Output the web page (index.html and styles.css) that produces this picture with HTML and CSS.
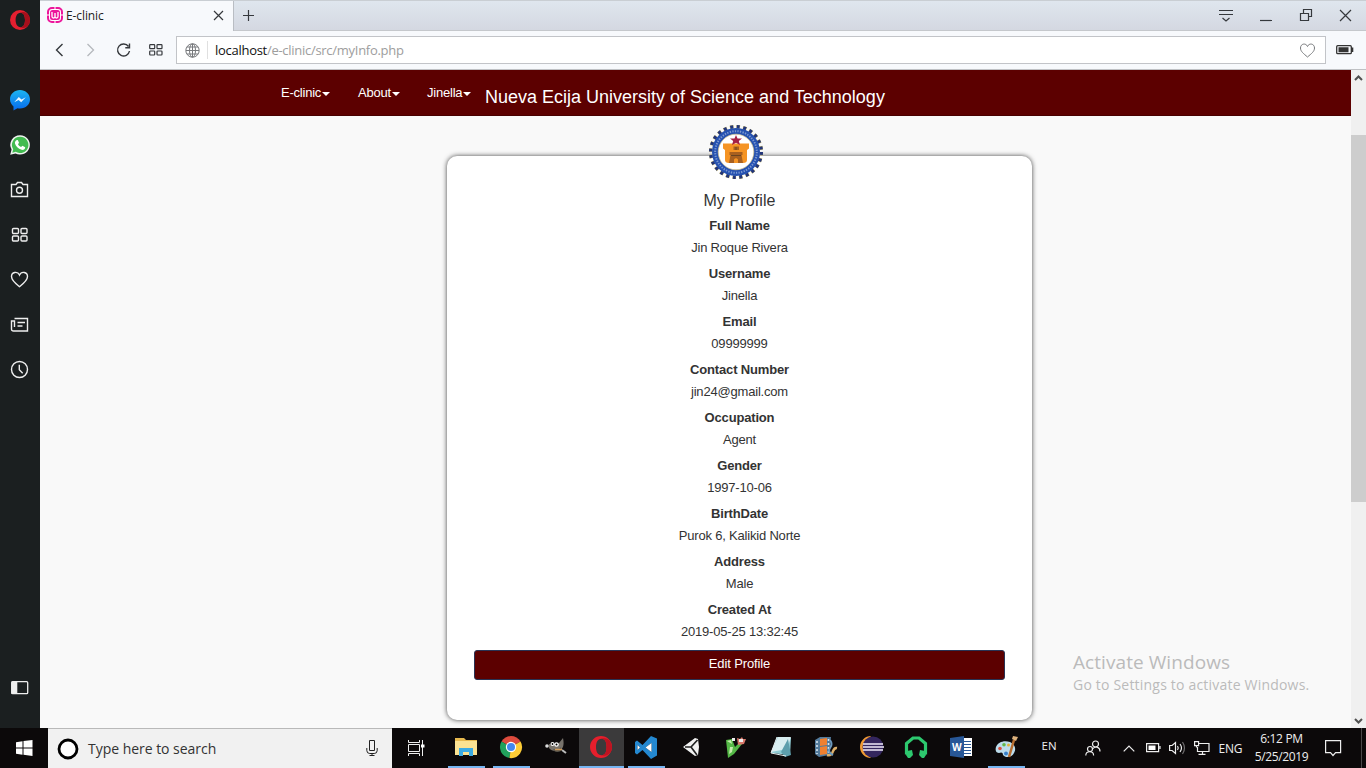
FILE: index.html
```html
<!DOCTYPE html>
<html lang="en">
<head>
<meta charset="utf-8">
<title>E-clinic</title>
<link rel="stylesheet" href="styles.css">
</head>
<body>
<div class="desktop">
<div class="browser">
  <aside class="sidebar">
    <div class="side-brand"><svg width="20" height="20" viewBox="0 0 20 20"><path fill="#e51f30" fill-rule="evenodd" d="M10 0a10 10 0 1 0 0 20a10 10 0 1 0 0-20zM10.500 2.800c3.400 0 4.500 3.700 4.500 7.200s-1.100 7.200-4.500 7.200s-4.900-3.700-4.900-7.200s1.500-7.200 4.900-7.200z"/><path fill="#a70f1b" d="M10.500 2.800c5-2.500 9.500 2 9.500 7.200s-4.500 9.700-9.500 7.200c3.500 0 4.500-3.700 4.500-7.200s-1-7.200-4.500-7.200z"/></svg></div>
    <div class="slot chat"><svg width="20" height="21" viewBox="0 0 20 21"><defs><linearGradient id="msg" x2="0" y2="1"><stop stop-color="#1cb5f2"/><stop offset="1" stop-color="#0669ee"/></linearGradient></defs><path fill="url(#msg)" d="M10 0C4.500 0 0 4 0 9.200c0 3 1.500 5.400 3.500 7.200V20.500l4-2.200c7 1.400 12.500-3 12.500-9C20 4 15.500 0 10 0z"/><path fill="#e9f5ff" d="M4.200 12.300l4.600-5.300 2.700 2.400 4.300-2.200-4.600 5-2.600-2.200z"/></svg></div>
    <div class="slot"><svg width="20" height="20" viewBox="0 0 20 20"><path fill="#eef3ee" d="M10.200.2a9.600 9.600 0 0 0-8.600 14.300L.2 19.800l5.300-1.400A9.700 9.700 0 1 0 10.200.2z"/><path fill="#42bb50" d="M10.200 1.700a8.200 8.200 0 0 0-7 12.600l-.9 3.400 3.500-.9A8.200 8.200 0 1 0 10.200 1.700z"/><path fill="#fff" d="M6.300 5.200l1.500-.1 1.200 2.700-1 1.500c.8 1.400 1.700 2.200 3.100 2.800l1.300-1.300 2.800 1.400c-.1 2.200-1.800 3-3.600 2.600-3.500-.8-5.800-3.400-6.600-6.200-.3-1.500.3-2.600 1.300-3.400z"/></svg></div>
    <div class="slot"><svg class="line" width="20" height="18" viewBox="0 0 20 18"><path d="M1.500 3.500h4.500l1.500-2h4L13 3.500h4.500v12h-16z"/><circle cx="9.500" cy="9.300" r="3"/></svg></div>
    <div class="slot"><svg class="line" width="18" height="16" viewBox="0 0 18 16"><rect x="1.500" y="1.500" width="6" height="5" rx="1"/><rect x="10" y="1.500" width="6" height="5" rx="1"/><rect x="1.500" y="9" width="6" height="5" rx="1"/><rect x="10" y="9" width="6" height="5" rx="1"/></svg></div>
    <div class="slot"><svg class="line" width="20" height="17" viewBox="0 0 20 17"><path d="M9.500 15.700C5 12.200 1.500 9 1.500 5.500c0-4.500 6-5.700 8-1.500 2-4.200 8-3 8 1.500 0 3.500-3.500 6.700-8 10.200z"/></svg></div>
    <div class="slot"><svg class="line" width="20" height="16" viewBox="0 0 20 16"><path d="M4.500 1.500h13v12.500h-14q-2 0-2-2v-8h3v6M7.500 5.500h7.500M7.500 9h5"/></svg></div>
    <div class="slot"><svg class="line" width="20" height="20" viewBox="0 0 20 20"><circle cx="9.500" cy="9.500" r="8"/><path d="M9.300 4.800v5l3.400 3.400"/></svg></div>
    <div class="side-toggle"><svg width="20" height="16" viewBox="0 0 20 16"><rect x="1.700" y="1.700" width="16" height="12" rx="1" fill="none" stroke="#eee" stroke-width="1.300"/><path fill="#eee" d="M1.500 1.500h5.800v12.500H1.500z"/></svg></div>
  </aside>
  <main class="window">
    <div class="tabs">
      <div class="tab">
        <svg width="16" height="16" viewBox="0 0 16 16"><rect x="1" y="1" width="14" height="14" rx="4" fill="#fff" stroke="#ec169b" stroke-width="2"/><rect x="3" y="3" width="10" height="10" rx="2.500" fill="#ec169b"/><path d="M5 5v4.500q0 1.500 1.500 1.500T8 9.500V6v3.500Q8 11 9.500 11T11 9.500V5" fill="none" stroke="#fff" stroke-width="1.300"/><path d="M7.500 0h1v2h-1zM0 7.500h2v1H0zM14 7.500h2v1h-2zM7.500 14h1v2h-1z" fill="#fff"/></svg>
        <span class="tab-title">E-clinic</span>
        <svg class="ink tab-close" width="11" height="11" viewBox="0 0 11 11"><path d="M1 1l9 9M10 1l-9 9"/></svg>
      </div>
      <svg class="ink new-tab" width="12" height="12" viewBox="0 0 12 12"><path d="M5.500 0v11M0 5.500h11"/></svg>
      <div class="controls">
        <svg class="ink" width="14" height="14" viewBox="0 0 14 14"><path d="M0 1.500h14M0 5.500h14M3.500 9l3.500 3 3.500-3"/></svg>
        <svg class="ink" width="12" height="14" viewBox="0 0 12 14"><path d="M0 11.500h12"/></svg>
        <svg class="ink" width="13" height="13" viewBox="0 0 13 13"><path d="M1.500 4.500h8v7h-8zM4.500 4.500v-4h8v7h-3"/></svg>
        <svg class="ink" width="13" height="13" viewBox="0 0 13 13"><path d="M1 1l11 11M12 1L1 12"/></svg>
      </div>
    </div>
    <div class="toolbar">
      <div class="tools">
        <svg class="ink bold" width="9" height="14" viewBox="0 0 9 14"><path d="M7.500 1L1.500 7l6 6"/></svg>
        <svg class="ink faint" width="9" height="14" viewBox="0 0 9 14"><path d="M1.500 1l6 6-6 6"/></svg>
        <svg class="ink bold" width="15" height="14" viewBox="0 0 15 14"><path d="M11.500 3.500A6 6 0 1 0 12.500 8M12.500.500v4.300H8.300"/></svg>
        <svg class="ink dial" width="14" height="12" viewBox="0 0 14 12"><rect x=".7" y=".7" width="5" height="4" rx=".7"/><rect x="8" y=".7" width="5" height="4" rx=".7"/><rect x=".7" y="7" width="5" height="4" rx=".7"/><rect x="8" y="7" width="5" height="4" rx=".7"/></svg>
      </div>
      <div class="address">
        <svg class="globe" width="15" height="15" viewBox="0 0 15 15"><circle cx="7.500" cy="7.500" r="6.700"/><ellipse cx="7.500" cy="7.500" rx="3" ry="6.700"/><path d="M7.500 1v13M1 7.500h13M2 4h11M2 11h11"/></svg>
        <span class="url">localhost<span class="path">/e-clinic/src/myInfo.php</span></span>
        <svg class="globe" width="16" height="15" viewBox="0 0 16 15"><path d="M7.500 14C3.500 10.500.5 8.500.5 5 .5.500 6 -.3 7.500 3.500 9-.3 14.500.5 14.500 5c0 3.500-3 5.500-7 9z"/></svg>
      </div>
      <svg class="battery" width="18" height="10" viewBox="0 0 18 10"><rect x=".7" y=".7" width="14.600" height="8" rx="1" fill="none" stroke="#333" stroke-width="1.300"/><path fill="#333" d="M2.500 2.300h10v5h-10zM15 2.500h2.300v4.500H15z"/></svg>
    </div>
    <div class="viewport">
      <div class="page">
        <nav class="navbar">
          <a class="menu m1">E-clinic<i class="caret"></i></a>
          <a class="menu m2">About<i class="caret"></i></a>
          <a class="menu m3">Jinella<i class="caret"></i></a>
          <span class="school">Nueva Ecija University of Science and Technology</span>
        </nav>
        <section class="card">
          <svg class="seal" width="56" height="56" viewBox="0 0 56 56"><circle cx="28" cy="28" r="25.300" fill="none" stroke="#c9b867" stroke-width="3.600" stroke-dasharray="3.700 2.923" stroke-dashoffset=".35"/><circle cx="28" cy="28" r="25.300" fill="none" stroke="#22357a" stroke-width="3.400" stroke-dasharray="3 3.623"/><circle cx="28" cy="28" r="24" fill="#2551b0"/><circle cx="28" cy="28" r="20.800" fill="none" stroke="#7c98d0" stroke-width="2" stroke-dasharray="1.300 1.300"/><circle cx="28" cy="28" r="17.800" fill="#fff" stroke="#d8c58a" stroke-width=".7"/><path d="M15 19.500h26v5l-2 1.500v10q0 3-4 3H21q-4 0-4-3V26l-2-1.500z" fill="#f59424"/><path d="M28 11l1.500 3.500h4.500l-3.200 2.500 1.200 4-4-2.300-4 2.300 1.200-4-3.200-2.500h4.500z" fill="#a52045"/><path d="M25.500 22.500h5.500v3.500h-5.500zM21.500 28h13v3h-1l1.500 8h-5v-3.500q-2-2.500-4 0V39h-5l1.500-8h-1z" fill="#a8601f"/><path d="M23 31.500h10M28 23v3" stroke="#6b4420"/></svg>
          <h1 class="heading">My Profile</h1>
          <dl class="fields">
            <dt>Full Name</dt><dd>Jin Roque Rivera</dd>
            <dt>Username</dt><dd>Jinella</dd>
            <dt>Email</dt><dd>09999999</dd>
            <dt>Contact Number</dt><dd>jin24@gmail.com</dd>
            <dt>Occupation</dt><dd>Agent</dd>
            <dt>Gender</dt><dd>1997-10-06</dd>
            <dt>BirthDate</dt><dd>Purok 6, Kalikid Norte</dd>
            <dt>Address</dt><dd>Male</dd>
            <dt>Created At</dt><dd>2019-05-25 13:32:45</dd>
          </dl>
          <a class="edit">Edit Profile</a>
        </section>
      </div>
      <div class="scrollbar">
        <svg width="9" height="6" viewBox="0 0 9 6"><path d="M1 5l3.500-3.500L8 5" fill="none" stroke="#505050" stroke-width="2"/></svg>
        <div class="thumb"></div>
        <svg class="down" width="9" height="6" viewBox="0 0 9 6"><path d="M1 1l3.500 3.500L8 1" fill="none" stroke="#505050" stroke-width="2"/></svg>
      </div>
    </div>
  </main>
</div>
<footer class="taskbar">
  <div class="start"><svg width="17" height="16" viewBox="0 0 17 16"><path fill="#fff" d="M0 2.200l6.500-.9v6.200H0zM7.500 1.100L16.500 0v7.500h-9zM0 8.500h6.500v6.200L0 13.800zM7.500 8.500h9V16l-9-1.200z"/></svg></div>
  <div class="search">
    <svg width="22" height="22" viewBox="0 0 22 22"><circle cx="11" cy="11" r="9" fill="#fff" stroke="#000" stroke-width="2.800"/></svg>
    <span class="search-text">Type here to search</span>
    <svg width="12" height="17" viewBox="0 0 12 17"><path d="M3.500.5h5v10h-5zM.8 8v2.500q0 3 3 3h4.400q3 0 3-3V8M6 13.500v2M3.500 15.500h5" fill="none" stroke="#222"/></svg>
  </div>
  <div class="view"><svg width="17" height="16" viewBox="0 0 17 16"><path d="M.5 0v2.500h11V0M.5 4.500h11v7H.5zM.5 16v-2.500h11V16M14.500 0v16" fill="none" stroke="#eee"/><path d="M13 4.500h3.500v3H13z" fill="#fff"/></svg></div>
  <div class="apps">
    <div class="app open"><svg width="22" height="20" viewBox="0 0 22 20"><path fill="#e7b94f" d="M0 1h9l2 2h11v14H0z"/><path fill="#fbe292" d="M0 4h22v14H0z"/><path fill="#3babe4" d="M4 11h14v8h-4v-4H8v4H4z"/></svg></div>
    <div class="app open"><svg width="22" height="22" viewBox="0 0 22 22"><path fill="#de4b3d" d="M11 11L1.500 5.500a11 11 0 0 1 19 0z"/><path fill="#21a15c" d="M11 11L9.500 22A11 11 0 0 1 1.500 5.500z"/><path fill="#fdcc36" d="M11 11l9.500-5.500A11 11 0 0 1 9.500 22z"/><circle cx="11" cy="11" r="5.200" fill="#fff"/><circle cx="11" cy="11" r="4" fill="#4388ee"/></svg></div>
    <div class="app"><svg width="24" height="20" viewBox="0 0 24 20"><path fill="#77726b" d="M5 7c3 1 7 1 10-1l4-5c1 5 1 9-2 12-5 2-10 1-12-2z"/><path fill="#5b564c" d="M9 12c4 1 7 0 8-2l0 4c-4 2-7 1-8-2z"/><circle cx="8.500" cy="7" r="2" fill="#fff"/><circle cx="12.500" cy="7.500" r="2.300" fill="#fff"/><circle cx="8.500" cy="7" r=".9"/><circle cx="12.500" cy="7.500" r="1"/><circle cx="3" cy="9" r="1.800" fill="#ddd"/><path d="M11 12.500l7 0" stroke="#d29a57" stroke-width="1.500" fill="none"/><path d="M18 13l4 3" stroke="#bbb" stroke-width="2"/></svg></div>
    <div class="app active"><svg width="24" height="22" viewBox="0 0 24 22"><path fill="#e51f2c" fill-rule="evenodd" d="M12 0a11 11 0 1 0 0 22a11 11 0 1 0 0-22zM12.500 2.800c4 0 5 4 5 8.200s-1 8.200-5 8.200S7 15.200 7 11s1.500-8.200 5.500-8.200z"/><path fill="#bd1421" d="M12.500 2.800c6-2 10.500 3 10.500 8.200s-4.500 10.200-10.500 8.200c4 0 5-4 5-8.200s-1-8.200-5-8.200z"/></svg></div>
    <div class="app open"><svg width="24" height="23" viewBox="0 0 24 23"><path fill="#2488d0" fill-rule="evenodd" d="M17 0l6 2.500v17L17 23 8.500 14 3 18.500 1 17V6l2-1.500L8.500 9zM17.500 7l-6 4.500 6 4.500zM3.500 9v5L6 11.500z"/><path fill="#fff" d="M17.500 7v9l-6-4.500zM3.500 9v5L6 11.500z"/></svg></div>
    <div class="app"><svg width="18" height="20" viewBox="0 0 18 20"><path fill="#f2f2f2" d="M1 10L13 1l3 1 1 8-1 8-3 1z"/><path d="M9 10L15.500 3M9 10l6 8M9 10H3" stroke="#222" stroke-width="1.700"/></svg></div>
    <div class="app"><svg width="22" height="22" viewBox="0 0 22 22"><path fill="#55b847" d="M1 4l6-1 3 8 4-4 3 1-8 10-6 4-1-9z"/><path fill="#c8ebae" d="M5 11h3l-1 5-3 2zM2 5l4-1 1 4z"/><path fill="#d8776a" d="M12 2l3 1 2-2 1 2 3 0-2 5-6 1z"/><path fill="#eee" d="M14 3h4v3h-4zM7 2h3v3H7z"/></svg></div>
    <div class="app"><svg width="24" height="22" viewBox="0 0 24 22"><path fill="#8fcbd4" d="M8 1l14 1-1 17-19-2z"/><path fill="#d8edf0" d="M9 1h13l-4 12-16 3z"/><path fill="#5d9eac" d="M19 3l3 16-6 2-4-5z"/><path d="M8 1L2 17l15 3" fill="none" stroke="#e4eced"/></svg></div>
    <div class="app"><svg width="24" height="22" viewBox="0 0 24 22"><path fill="#547b9c" d="M1 4l5-3h11l-2 18-10 2-4-3z"/><path fill="#f08030" d="M6 3l7-1v7l-7 1zM6 11l7-1v8l-7 1z"/><path d="M3 5v13M14.500 3v15" stroke="#d7e4ed" stroke-width="1.600" stroke-dasharray="2 2"/><path d="M13 19c8 2 4-8 10-7" stroke="#deb06b" stroke-width="2.500" fill="none"/><path d="M16 4q3 4 0 8t3 7" stroke="#6d9abf" stroke-width="2" fill="none"/></svg></div>
    <div class="app"><svg width="25" height="22" viewBox="0 0 25 22"><path fill="#f19b35" d="M12 0A11 11 0 0 0 12 22 16 16 0 0 1 12 0z"/><ellipse cx="14" cy="11" rx="10.500" ry="10.500" fill="#34265e"/><path d="M4 8h20M4 11h21M4 14h20" stroke="#f0eafa" stroke-width="1.700"/></svg></div>
    <div class="app"><svg width="24" height="22" viewBox="0 0 24 22"><path d="M6 17H2.500V7.500L9 2h6l6.500 5.500V17H18" fill="none" stroke="#2dc96f" stroke-width="3.200"/><path fill="#2dc96f" d="M3 15l5-1 1 5-3 3H4l-2-3zM21 15l-5-1-1 5 3 3h2l2-3z"/></svg></div>
    <div class="app"><svg width="23" height="22" viewBox="0 0 23 22"><path fill="#fff" d="M11 2h11v18H11z"/><path d="M14 5.500h7M14 8.500h7M14 11.500h7M14 14.500h7M14 17.500h7" stroke="#285797"/><path fill="#285797" d="M0 2l14-2v22L0 20z"/><text x="2" y="15" class="word">W</text></svg></div>
    <div class="app open"><svg width="25" height="23" viewBox="0 0 25 23"><path fill="#bcdcec" d="M2 11c2-5 8-7 14-5 6 3 6 8 4 11-2 5-9 5-11 2 0-3-2-3-4-2-3 0-4-3-3-6z"/><circle cx="6" cy="12.500" r="1.800" fill="#d9503f"/><circle cx="10" cy="8.800" r="1.800" fill="#63b84a"/><circle cx="14.500" cy="9" r="1.500" fill="#e1b23d"/><circle cx="12" cy="17.500" r="2" fill="#377fca"/><path d="M15 21l5-17" stroke="#b66d30" stroke-width="2.500"/><path d="M18 3l1-3 5 1-2 4z" fill="#dfb27d"/></svg></div>
  </div>
  <span class="lang">EN</span>
  <svg class="white people" width="16" height="17" viewBox="0 0 16 17"><circle cx="10.500" cy="4" r="3"/><circle cx="5" cy="9" r="2.500"/><path d="M.8 15.500c0-5 7.800-5 7.800 0M8 8.500c3-3 7-1 7 3"/></svg>
  <svg class="white up" width="12" height="7" viewBox="0 0 12 7"><path d="M.7 6.300L6 1l5.300 5.300"/></svg>
  <svg class="white power" width="15" height="10" viewBox="0 0 15 10"><path d="M.6.600h12v8H.6zM14 3v3"/><path d="M2.500 2.500h7v4.500h-7z" fill="#fff" stroke="none"/></svg>
  <svg class="white sound" width="17" height="14" viewBox="0 0 17 14"><path d="M.6 4.500h2.500L6.500 1.500v11L3.100 9.500H.6zM8.500 5q1.500 2 0 4M11 3q3 4 0 8"/><path d="M13.500 1q4 6 0 12" opacity=".45"/></svg>
  <svg class="white net" width="17" height="14" viewBox="0 0 17 14"><path d="M5 2.500h10v8H3.500V6M8.500 10.500v3M4.500 13.300h7M.6.600h4v4h-4zM2.500 4.500v2"/></svg>
  <span class="eng">ENG</span>
  <div class="clock"><span class="time">6:12 PM</span><span class="date">5/25/2019</span></div>
  <svg class="white note" width="17" height="17" viewBox="0 0 17 17"><path d="M.6.600h15v12h-5L8 15.500 5.500 12.600H.6z"/></svg>
  <div class="peek"></div>
</footer>
<div class="watermark"><div class="activate">Activate Windows</div><div class="settings">Go to Settings to activate Windows.</div></div>
</div>
</body>
</html>
```
FILE: styles.css
```css
* { box-sizing: border-box; }
body { margin: 0; overflow: hidden; font-family: "Open Sans", "Noto Sans", sans-serif; }
svg { display: block; flex: none; overflow: visible; }
span, a { white-space: nowrap; }
.desktop { position: relative; width: 1366px; height: 768px; display: flex; flex-direction: column; }
.browser { display: flex; height: 728px; }
.sidebar { width: 40px; background: #1b1f20; display: flex; flex-direction: column; align-items: center; padding-top: 10px; }
.side-brand { height: 67px; }
.slot { height: 45px; display: flex; align-items: center; }
.chat { padding-top: 2px; }
.side-toggle { margin-top: auto; padding-bottom: 32px; }
.line { fill: none; stroke: #eee; stroke-width: 1.4; }
.window { width: 1326px; display: flex; flex-direction: column; }
.tabs { height: 31px; background: linear-gradient(#dfe6ee, #d4d8e1); display: flex; align-items: center; border-bottom: 1px solid #c5c8cc; border-top: 1px solid #c9ced3; }
.tab { width: 194px; height: 31px; margin-bottom: -2px; background: #f7f9fc; border-right: 1px solid #b9bdc3; display: flex; align-items: center; padding: 0 9px 3px 7px; }
.tab-title { margin-left: 3px; font-size: 12px; letter-spacing: -.1px; color: #222; }
.tab-close { margin-left: auto; }
.ink { fill: none; stroke: #35383c; stroke-width: 1.2; }
.bold { stroke-width: 1.4; }
.faint { stroke: #b5b8bc; stroke-width: 1.3; }
.dial { margin-left: -5px; }
.new-tab { margin-left: 9px; }
.controls { margin-left: auto; margin-right: 14px; display: flex; gap: 27px; align-items: center; }
.toolbar { height: 39px; background: #f7f9fc; border-bottom: 1px solid #bfc1c4; display: flex; align-items: center; }
.tools { width: 136px; display: flex; align-items: center; gap: 22px; padding-left: 15px; }
.address { width: 1150px; height: 28px; background: #fff; border: 1px solid #c2c4c8; display: flex; align-items: center; padding: 0 9px 0 8px; }
.globe { fill: none; stroke: #77797c; stroke-width: 1; }
.url { flex: 1; margin-left: 7px; padding-left: 7px; border-left: 1px solid #e0e0e0; font-size: 13px; letter-spacing: -.28px; color: #111; }
.path { color: #9d9d9d; }
.battery { margin-left: 10px; }
.viewport { height: 658px; display: flex; }
.page { width: 1311px; background: #f9f9f9; font-family: "Liberation Sans", Arial, sans-serif; display: flex; flex-direction: column; align-items: flex-start; }
.navbar { width: 1311px; height: 46px; background: #5c0000; border-bottom: 1px solid #490000; display: flex; color: #fff; padding-left: 241px; }
.menu { display: flex; align-items: center; height: 45px; font-size: 13px; letter-spacing: -.22px; }
.caret { border: 4px solid transparent; border-top-color: #fff; border-bottom: 0; margin: 3px 0 0 1px; }
.m1 { width: 77px; } .m2 { width: 69px; } .m3 { width: 58px; }
.school { font-size: 18px; line-height: 54px; }
.card { width: 585px; height: 564px; margin: 40px 0 0 407px; background: #fff; border-radius: 10px; box-shadow: 0 0 5px #444; display: flex; flex-direction: column; align-items: center; color: #333; padding: 0 27px; }
.seal { margin-top: -32px; margin-right: 7px; }
.heading { font-size: 16px; font-weight: 400; line-height: 20px; margin: 11px 0 4px; letter-spacing: .1px; }
.fields { margin: 0; text-align: center; font-size: 13px; letter-spacing: -.19px; }
.fields dt { height: 22px; line-height: 22px; font-weight: 700; letter-spacing: -.17px; }
.fields dd { height: 26px; line-height: 22px; margin: 0; }
.edit { width: 531px; height: 30px; background: #5c0000; border: 1px solid #293354; border-radius: 3px; color: #fff; font-size: 13px; letter-spacing: -.12px; line-height: 25px; text-align: center; margin-top: 3px; }
.scrollbar { width: 15px; background: #f0f0f0; padding-top: 5px; display: flex; flex-direction: column; align-items: center; }
.thumb { width: 15px; height: 367px; background: #cdcdcd; margin-top: 54px; }
.down { margin-top: auto; margin-bottom: 4px; }
.watermark { position: absolute; left: 1073px; top: 651px; color: #bbb; white-space: nowrap; }
.activate { font-size: 19px; line-height: 22px; letter-spacing: .07px; }
.settings { font-size: 14px; line-height: 23px; letter-spacing: .2px; }
.taskbar { height: 40px; background: #0c090a; display: flex; align-items: center; color: #eee; font-size: 12px; }
.start { width: 48px; padding-left: 16px; }
.search { width: 344px; height: 40px; background: #f1f1f1; border-top: 1px solid #b9b9b9; color: #333; display: flex; align-items: center; padding: 0 14px 0 9px; }
.search-text { flex: 1; margin-left: 9px; font-size: 14px; letter-spacing: -.03px; }
.view { width: 51.500px; padding-left: 16px; }
.apps { display: flex; height: 40px; width: 585px; }
.app { flex: 1; height: 40px; display: flex; align-items: center; justify-content: center; border-bottom: 2px solid transparent; }
.open { background: linear-gradient(#76b5f2, #76b5f2) center bottom / 37px 2px no-repeat border-box; }
.active { background: #3b3a3b; border-bottom-color: #76b5f2; }
.word { font: bold 10px "Open Sans", sans-serif; fill: #fff; }
.lang { margin-left: 13px; width: 43px; font-size: 11.500px; margin-top: -5px; }
.white { fill: none; stroke: #eee; stroke-width: 1.2; }
.people { margin-right: 22px; } .up { margin-right: 11px; } .power { margin-right: 8px; }
.sound { margin-right: 8px; } .net { margin-right: 8px; }
.eng { width: 32px; letter-spacing: -.2px; }
.clock { width: 62px; display: flex; flex-direction: column; align-items: center; line-height: 18px; margin-right: 12px; letter-spacing: -.35px; }
.peek { width: 1px; height: 40px; margin-left: auto; margin-right: 4px; background: #4a4849; }
```
